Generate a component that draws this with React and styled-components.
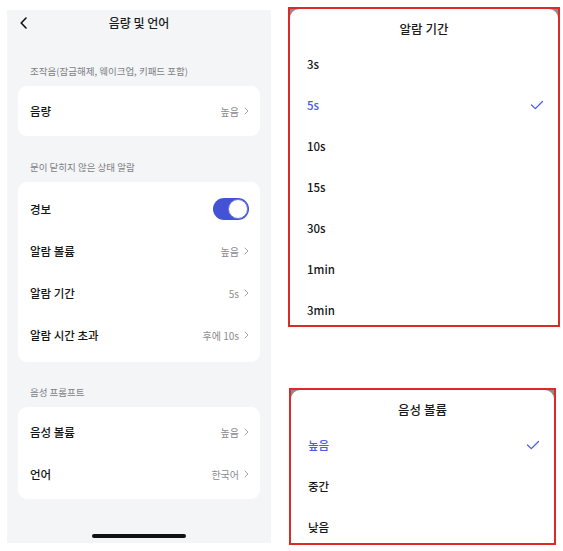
import React from "react";
import styled, { createGlobalStyle } from "styled-components";

const Global = createGlobalStyle`
  html, body { margin: 0; padding: 0; background: #ffffff; }
  body { font-family: "Noto Sans CJK KR", "Noto Sans", sans-serif; -webkit-font-smoothing: antialiased; }
  * { box-sizing: border-box; }
`;

const Page = styled.div`
  display: flex;
  align-items: flex-start;
  width: 563px;
  height: 551px;
`;

const Phone = styled.div`
  margin: 10px 0 0 7px;
  width: 264px;
  height: 533px;
  background: #f4f5f7;
  padding: 0 11px;
  display: flex;
  flex-direction: column;
`;

const Header = styled.div`
  height: 25px;
  display: flex;
  align-items: center;
  justify-content: center;
  position: relative;
  font-size: 12px;
  font-weight: 500;
  color: #1b1b1b;
`;

const Back = styled.span`
  position: absolute;
  left: 2px;
  top: 7px;
  display: flex;
`;

const SectionLabel = styled.div`
  margin: ${(p) => p.$top}px 0 8px;
  padding-left: 12px;
  font-size: 9.5px;
  line-height: 14px;
  color: #7d7f84;
`;

const Card = styled.div`
  background: #ffffff;
  border-radius: 9px;
  padding: ${(p) => p.$pad}px 11px ${(p) => p.$pad}px 12px;
`;

const Row = styled.div`
  height: 42px;
  display: flex;
  align-items: center;
  justify-content: space-between;
`;

const RowLabel = styled.span`
  font-size: 11.5px;
  font-weight: 500;
  color: #151515;
`;

const RowValue = styled.span`
  display: flex;
  align-items: center;
  gap: 5px;
  font-size: 10px;
  color: #8a8b8f;
`;

const Toggle = styled.div`
  width: 36px;
  height: 22px;
  border-radius: 11px;
  background: #4453d6;
  display: flex;
  align-items: center;
  justify-content: flex-end;
  padding: 0 1px;
`;

const Knob = styled.div`
  width: 20px;
  height: 20px;
  border-radius: 50%;
  background: #ffffff;
  border: 1px solid #6d78e0;
`;

const HomeBar = styled.div`
  margin: auto auto 5px;
  width: 94px;
  height: 4px;
  border-radius: 2px;
  background: #111111;
`;

const Column = styled.div`
  margin-left: 17px;
  display: flex;
  flex-direction: column;
`;

const Frame = styled.div`
  margin-top: ${(p) => p.$top}px;
  margin-left: ${(p) => p.$left}px;
  width: ${(p) => p.$w}px;
  height: ${(p) => p.$h}px;
  border: 2px solid #dc2b26;
  background: #8d8d8d;
  overflow: hidden;
  display: flex;
`;

const Sheet = styled.div`
  flex: 1;
  background: #ffffff;
  border-radius: 9px 9px 0 0;
  display: flex;
  flex-direction: column;
  overflow: hidden;
`;

const SheetTitle = styled.div`
  padding-top: 12px;
  line-height: 16px;
  text-align: center;
  font-size: 12.5px;
  font-weight: 500;
  color: #1a1a1a;
  margin-bottom: 6px;
`;

const Option = styled.div`
  flex: none;
  height: 41px;
  display: flex;
  align-items: center;
  justify-content: space-between;
  padding: 0 14px 0 17px;
  font-size: 11.5px;
  font-weight: 500;
  color: ${(p) => (p.$active ? "#4a5ce6" : "#161616")};
`;

const Chevron = () => (
  <svg width="5" height="8" viewBox="0 0 5 8" fill="none">
    <path d="M1 1l3 3-3 3" stroke="#a3a5aa" strokeWidth="1" strokeLinecap="round" strokeLinejoin="round" />
  </svg>
);

const Check = () => (
  <svg width="14" height="10" viewBox="0 0 14 10" fill="none">
    <path d="M1.5 5l3.8 3.6L12.5 1.5" stroke="#4a5ce6" strokeWidth="1.3" strokeLinecap="round" strokeLinejoin="round" />
  </svg>
);

const ValueRow = ({ label, value }) => (
  <Row>
    <RowLabel>{label}</RowLabel>
    <RowValue>
      {value}
      <Chevron />
    </RowValue>
  </Row>
);

const durations = ["3s", "5s", "10s", "15s", "30s", "1min", "3min"];
const volumes = ["높음", "중간", "낮음"];

export default function App() {
  return (
    <Page>
      <Global />
      <Phone>
        <Header>
          <Back>
            <svg width="7" height="12" viewBox="0 0 7 12" fill="none">
              <path d="M6 1L1.2 6 6 11" stroke="#111" strokeWidth="1.6" strokeLinecap="round" strokeLinejoin="round" />
            </svg>
          </Back>
          음량 및 언어
        </Header>
        <SectionLabel $top={29}>조작음(잠금해제, 웨이크업, 키패드 포함)</SectionLabel>
        <Card $pad={4}>
          <ValueRow label="음량" value="높음" />
        </Card>
        <SectionLabel $top={24}>문이 닫히지 않은 상태 알람</SectionLabel>
        <Card $pad={6}>
          <Row>
            <RowLabel>경보</RowLabel>
            <Toggle>
              <Knob />
            </Toggle>
          </Row>
          <ValueRow label="알람 볼륨" value="높음" />
          <ValueRow label="알람 기간" value="5s" />
          <ValueRow label="알람 시간 초과" value="후에 10s" />
        </Card>
        <SectionLabel $top={23}>음성 프롬프트</SectionLabel>
        <Card $pad={4}>
          <ValueRow label="음성 볼륨" value="높음" />
          <ValueRow label="언어" value="한국어" />
        </Card>
        <HomeBar />
      </Phone>
      <Column>
        <Frame $top={7} $left={0} $w={272} $h={320}>
          <Sheet>
            <SheetTitle>알람 기간</SheetTitle>
            {durations.map((d) => (
              <Option key={d} $active={d === "5s"}>
                {d}
                {d === "5s" && <Check />}
              </Option>
            ))}
          </Sheet>
        </Frame>
        <Frame $top={61} $left={1} $w={267} $h={157}>
          <Sheet>
            <SheetTitle>음성 볼륨</SheetTitle>
            {volumes.map((v) => (
              <Option key={v} $active={v === "높음"}>
                {v}
                {v === "높음" && <Check />}
              </Option>
            ))}
          </Sheet>
        </Frame>
      </Column>
    </Page>
  );
}
